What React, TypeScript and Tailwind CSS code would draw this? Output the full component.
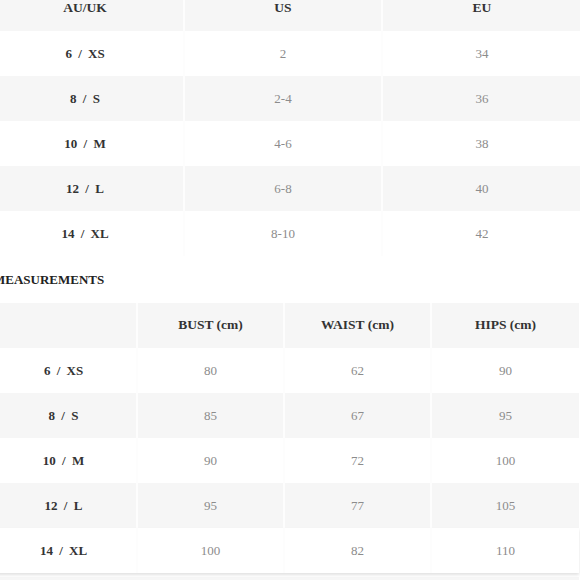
import React from "react";

const sizeRows = [
  { size: "6 / XS", us: "2", eu: "34" },
  { size: "8 / S", us: "2-4", eu: "36" },
  { size: "10 / M", us: "4-6", eu: "38" },
  { size: "12 / L", us: "6-8", eu: "40" },
  { size: "14 / XL", us: "8-10", eu: "42" },
];

const measureRows = [
  { size: "6 / XS", bust: "80", waist: "62", hips: "90" },
  { size: "8 / S", bust: "85", waist: "67", hips: "95" },
  { size: "10 / M", bust: "90", waist: "72", hips: "100" },
  { size: "12 / L", bust: "95", waist: "77", hips: "105" },
  { size: "14 / XL", bust: "100", waist: "82", hips: "110" },
];

type Kind = "head" | "size" | "value";

const Cell: React.FC<{ children?: React.ReactNode; kind?: Kind; last?: boolean }> = ({ children, kind = "value", last }) => {
  const text =
    kind === "head"
      ? "font-bold text-[#333] text-[13.5px]"
      : kind === "size"
      ? "font-bold text-[#333] text-[13px] [word-spacing:3px]"
      : "text-[#8c8c8c] text-[13px]";
  return (
    <div className={`h-[45px] flex items-center justify-center ${last ? "" : "border-r-2 border-[#fdfdfd]"} ${text}`}>
      {children}
    </div>
  );
};

const App: React.FC = () => {
  return (
    <div
      className="w-[580px] h-[580px] overflow-hidden bg-white"
      style={{ fontFamily: '"Liberation Serif", "Times New Roman", serif' }}
    >
      {/* size conversion */}
      <div className="ml-[-13px] mt-[-14px] w-[594px]">
        <div className="grid grid-cols-3 bg-[#f6f6f6]">
          <Cell kind="head">AU/UK</Cell>
          <Cell kind="head">US</Cell>
          <Cell kind="head" last>EU</Cell>
        </div>
        {sizeRows.map((r, i) => (
          <div key={r.size} className={`grid grid-cols-3 ${i % 2 === 1 ? "bg-[#f6f6f6]" : "bg-white"}`}>
            <Cell kind="size">{r.size}</Cell>
            <Cell>{r.us}</Cell>
            <Cell last>{r.eu}</Cell>
          </div>
        ))}
      </div>

      <div className="h-[47px] flex items-center ml-[-7px] text-[13px] font-bold text-[#222]">MEASUREMENTS</div>

      {/* measurements */}
      <div className="ml-[-9px] w-[588px]">
        <div className="grid grid-cols-4 bg-[#f6f6f6]">
          <Cell />
          <Cell kind="head">BUST (cm)</Cell>
          <Cell kind="head">WAIST (cm)</Cell>
          <Cell kind="head" last>HIPS (cm)</Cell>
        </div>
        {measureRows.map((r, i) => (
          <div
            key={r.size}
            className={`grid grid-cols-4 ${i % 2 === 1 ? "bg-[#f6f6f6]" : "bg-white"} ${
              i === measureRows.length - 1 ? "shadow-[0_2px_3px_rgba(0,0,0,0.12)] relative" : ""
            }`}
          >
            <Cell kind="size">{r.size}</Cell>
            <Cell>{r.bust}</Cell>
            <Cell>{r.waist}</Cell>
            <Cell last>{r.hips}</Cell>
          </div>
        ))}
        <div className="h-[4px] bg-white" />
        <div className="h-[20px] bg-[#f6f6f6]" />
      </div>
    </div>
  );
};

export default App;
